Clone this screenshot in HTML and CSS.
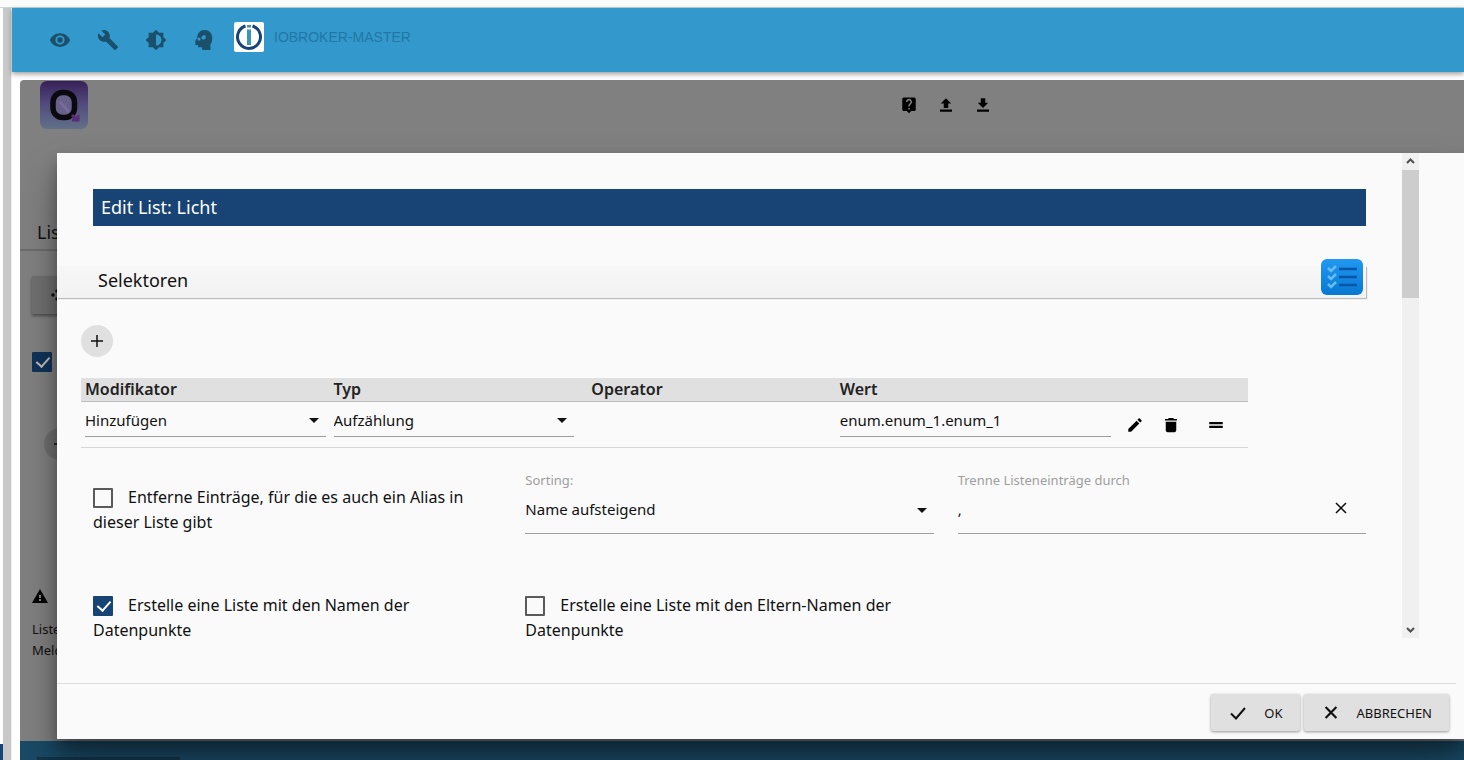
FILE: index.html
```html
<!DOCTYPE html>
<html lang="de">
<head>
<meta charset="utf-8">
<title>ioBroker – Edit List</title>
<link rel="stylesheet" href="styles.css">
</head>
<body>
<div class="top-strip"></div>
<div class="shell">
  <aside class="rail"><div class="rail-track"></div><div class="rail-mark"></div></aside>
  <div class="page">
    <header class="toolbar">
      <button class="tool" aria-label="Anzeigen"><svg viewBox="0 0 24 24"><path d="M12 9a3 3 0 0 0 0 6 3 3 0 0 0 0-6m0 8a5 5 0 1 1 0-10 5 5 0 0 1 0 10m0-12.500C7 4.500 2.700 7.600 1 12c1.700 4.400 6 7.500 11 7.500s9.300-3.100 11-7.500c-1.700-4.400-6-7.500-11-7.500z"/></svg></button>
      <button class="tool" aria-label="Einstellungen"><svg viewBox="0 0 24 24"><path d="M22.700 19l-9.100-9.100c.9-2.300.4-5-1.500-6.900-2-2-5-2.400-7.400-1.300L9 6 6 9 1.600 4.700C.4 7.100.9 10.100 2.900 12.100c1.900 1.900 4.600 2.400 6.900 1.500l9.100 9.100c.4.4 1 .4 1.400 0l2.300-2.300c.5-.4.5-1.100.1-1.400z"/></svg></button>
      <button class="tool" aria-label="Helligkeit"><svg viewBox="0 0 24 24"><path d="M20 15.300 23.300 12 20 8.700V4h-4.700L12 .7 8.700 4H4v4.700L.7 12 4 15.300V20h4.700l3.300 3.300 3.300-3.300H20v-4.700zM12 18V6a6 6 0 0 1 0 12z"/></svg></button>
      <button class="tool" aria-label="Expertenmodus"><svg viewBox="0 0 24 24"><path fill-rule="evenodd" d="M13 1C9 1 6 3 5 6.500L4.500 9.500 2.500 13v4.500h3V20H10v3h9v-6.500c1.500-1.500 2-4 2-7C21 4.500 17.500 1 13 1zM11.500 6.500a2.500 2.500 0 1 1-2.500 2.500zM5 9.500h3v3H5z"/></svg></button>
      <div class="brand">
        <svg class="brand-logo" viewBox="0 0 30 30"><rect width="30" height="30" rx="2" fill="#fff"/><path d="M11.500 4A11.500 11.500 0 1 0 18.500 4" fill="none" stroke="#174475" stroke-width="3"/><path d="M15 7.500V23" stroke="#3a94bd" stroke-width="4"/><path d="M13 3h4v2.500h-4z" fill="#3a94bd"/></svg>
        <span class="brand-name">IOBROKER-MASTER</span>
      </div>
    </header>

    <main class="panel">
      <div class="panel-top">
        <svg class="q-logo" viewBox="0 0 48 48"><defs><linearGradient id="qg" x1="0" y1="0" x2="0" y2="1"><stop offset="0" stop-color="#382057"/><stop offset=".45" stop-color="#50487c"/><stop offset="1" stop-color="#617088"/></linearGradient></defs><rect width="48" height="48" rx="7" fill="url(#qg)"/><rect x="13" y="11.500" width="21.500" height="25" rx="9.500" fill="#66608a" stroke="#0a0a0e" stroke-width="5.500"/><path d="M20 21l9 10" stroke="#7a6b9c" stroke-width="3"/><path d="M32 34l6 6m0-6v5h-6" fill="none" stroke="#5b2c78" stroke-width="3"/></svg>
        <div class="panel-actions">
          <button class="mini" aria-label="Hilfe"><svg viewBox="0 0 24 24"><path fill-rule="evenodd" d="M19 2H5a2 2 0 0 0-2 2v14c0 1.100.9 2 2 2h4l3 3 3-3h4a2 2 0 0 0 2-2V4a2 2 0 0 0-2-2zm-6 16h-2v-2h2v2zm2.100-7.700-.9.900c-.8.700-1.200 1.300-1.200 2.800h-2v-.5c0-1.100.4-2.100 1.200-2.800l1.200-1.300A2 2 0 1 0 10 8H8a4 4 0 1 1 7.100 2.300z"/></svg></button>
          <button class="mini" aria-label="Hochladen"><svg viewBox="0 0 24 24"><path d="M9 16h6v-6h4l-7-7-7 7h4v6zM4 18h16v3H4z"/></svg></button>
          <button class="mini" aria-label="Herunterladen"><svg viewBox="0 0 24 24"><path d="M15 3H9v6H5l7 7 7-7h-4V3zM4 18h16v3H4z"/></svg></button>
        </div>
      </div>
      <h2 class="bg-title">Listen</h2>
      <div class="bg-side">
        <button class="bg-button" aria-label="Listen"><svg viewBox="0 0 24 24"><circle cx="5" cy="12" r="3"/><circle cx="12" cy="5" r="3"/><circle cx="12" cy="19" r="3"/><circle cx="16" cy="12" r="3"/></svg></button>
        <input class="check bg-check" type="checkbox" checked aria-label="Aktiv">
        <button class="round bg-round" aria-label="Hinzufügen"><svg viewBox="0 0 12 12"><path d="M6 0v12M0 6h12"/></svg></button>
        <svg class="warning" viewBox="0 0 16 14"><path fill-rule="evenodd" d="M8 0l8 14H0zM7 6v3h2V6zm0 4v2h2v-2z"/></svg>
        <p class="bg-note">Liste<br>Meldung</p>
      </div>
      <footer class="panel-foot"><div class="foot-button"></div></footer>

      <section class="modal" role="dialog" aria-labelledby="dlg">
        <div class="modal-main">
          <div class="modal-body">
            <h1 class="title" id="dlg">Edit List: Licht</h1>
            <div class="section">
              <h2 class="section-name">Selektoren</h2>
              <svg class="section-icon" viewBox="0 0 42 36"><defs><linearGradient id="lg" x1="0" y1="0" x2="0" y2="1"><stop offset="0" stop-color="#2098f2"/><stop offset="1" stop-color="#0878d2"/></linearGradient></defs><rect width="42" height="36" rx="6" fill="url(#lg)"/><g fill="none" stroke-width="2.500"><path d="M7 9l3 3 5-5M7 17l3 3 5-5M7 25l3 3 5-5" stroke="#65bdf0"/><path d="M18 10h18M18 18h18M18 26h18" stroke="#0b55a8"/></g></svg>
            </div>
            <button class="round" aria-label="Selektor hinzufügen"><svg viewBox="0 0 12 12"><path d="M6 0v12M0 6h12"/></svg></button>
            <table class="selectors">
              <colgroup><col class="c-mod"><col class="c-typ"><col class="c-op"><col class="c-val"><col></colgroup>
              <thead><tr><th>Modifikator</th><th>Typ</th><th>Operator</th><th>Wert</th><th></th></tr></thead>
              <tbody><tr>
                <td><div class="pick"><select class="field" aria-label="Modifikator"><option>Hinzufügen</option></select></div></td>
                <td class="typ"><div class="pick"><select class="field" aria-label="Typ"><option>Aufzählung</option></select></div></td>
                <td></td>
                <td><input class="field" type="text" aria-label="Wert" value="enum.enum_1.enum_1"></td>
                <td><div class="row-tools">
                  <button class="mini" aria-label="Bearbeiten"><svg viewBox="0 0 24 24"><path d="M3 17.200V21h3.800L17.800 9.900l-3.700-3.700L3 17.200zM20.700 7c.4-.4.4-1 0-1.400l-2.300-2.300c-.4-.4-1-.4-1.400 0l-1.800 1.800 3.700 3.700L20.700 7z"/></svg></button>
                  <button class="mini" aria-label="Löschen"><svg viewBox="0 0 24 24"><path d="M5 19c0 1.500 1 2.500 2.500 2.500h9c1.500 0 2.500-1 2.500-2.500V7.500H5V19zM20 4h-4l-1-1.500H9L8 4H4v2h16V4z"/></svg></button>
                  <button class="mini drag" aria-label="Verschieben"><svg viewBox="0 0 24 24"><path d="M3 8h18v3H3zM3 13h18v3H3z"/></svg></button>
                </div></td>
              </tr></tbody>
            </table>
            <div class="options">
              <label class="option"><input class="check" type="checkbox"><span>Entferne Einträge, für die es auch ein Alias in dieser Liste gibt</span></label>
              <div class="entry">
                <label for="sort">Sorting:</label>
                <div class="pick"><select class="field" id="sort"><option>Name aufsteigend</option></select></div>
              </div>
              <div class="entry">
                <label for="sep">Trenne Listeneinträge durch</label>
                <div class="clearable"><input class="field" id="sep" type="text" value=","><button class="clear" aria-label="Leeren"><svg viewBox="0 0 12 12"><path d="M1 1l10 10M11 1L1 11"/></svg></button></div>
              </div>
              <label class="option"><input class="check" type="checkbox" checked><span>Erstelle eine Liste mit den Namen der Datenpunkte</span></label>
              <label class="option"><input class="check" type="checkbox"><span>Erstelle eine Liste mit den Eltern-Namen der Datenpunkte</span></label>
            </div>
          </div>
          <div class="scroll">
            <svg viewBox="0 0 17 17"><path d="M5 10l3.500-3.500L12 10"/></svg>
            <div class="thumb"></div>
            <svg class="scroll-down" viewBox="0 0 17 17"><path d="M5 7l3.500 3.500L12 7"/></svg>
          </div>
        </div>
        <div class="modal-foot">
          <button class="btn"><svg viewBox="0 0 16 14"><path d="M1 7.500l5 5L15 2"/></svg>OK</button>
          <button class="btn"><svg class="cross" viewBox="0 0 12 12"><path d="M1 1l10 10M11 1L1 11"/></svg>ABBRECHEN</button>
        </div>
      </section>
    </main>
  </div>
</div>
</body>
</html>
```
FILE: styles.css
```css
* { box-sizing: border-box; }
body {
  margin: 0;
  height: 100vh;
  display: flex;
  flex-direction: column;
  overflow: hidden;
  background: #fff;
  color: #111;
  font: 16px/24px "Noto Sans", sans-serif;
}
h1, h2, p { margin: 0; font-weight: 400; }
button { font: inherit; color: inherit; border: 0; padding: 0; background: none; display: grid; place-items: center; cursor: pointer; }

.top-strip { height: 8px; flex: none; background: #fafcfa; border-bottom: 1px solid #c8d4da; }
.shell { flex: 1; display: flex; min-height: 0; }
.rail { width: 12px; display: flex; flex-direction: column; }
.rail-track { flex: 1; border-left: 3px solid #fff; border-right: 1px solid #eee; background: #c9c9c9; }
.rail-mark { height: 16px; border-left: 3px solid #174475; border-right: 1px solid #eee; background: #c9c9c9; }
.page { flex: 1; min-width: 0; display: flex; flex-direction: column; }

.toolbar {
  height: 64px;
  flex: none;
  display: flex;
  align-items: center;
  gap: 24px;
  padding-left: 36px;
  background: #3399cc;
  box-shadow: 0 2px 5px rgba(0, 0, 0, .4);
}
.tool { width: 24px; height: 24px; color: #1b506b; }
.tool svg { width: 22px; height: 22px; fill: currentColor; }
.brand { display: flex; align-items: center; gap: 10px; margin: 0 0 6px -6px; }
.brand-logo { width: 30px; height: 30px; }
.brand-name { font: 14px/20px "Liberation Sans", Arial, sans-serif; color: #2277a4; }

.panel {
  flex: 1;
  position: relative;
  display: flex;
  flex-direction: column;
  margin: 8px 0 0 8px;
  overflow: hidden;
  border-radius: 4px 0 0 0;
  background: #808080;
}
.panel-top { display: flex; padding: 1px 0 0 20px; height: 138px; }
.q-logo { width: 48px; height: 48px; }
.panel-actions { display: flex; gap: 19px; margin: 15px 0 0 57%; height: 18px; }
.mini { width: 18px; height: 18px; color: #000; }
.mini svg { width: 18px; height: 18px; fill: currentColor; }
.bg-title { padding: 0 17px; height: 33px; font-size: 18px; line-height: 28px; border-bottom: 2px solid #6c6c6c; }
.bg-side { flex: 1; display: flex; flex-direction: column; align-items: flex-start; padding: 25px 12px 0; }
.bg-button { width: 90px; height: 38px; padding-left: 18px; justify-items: start; background: #707070; box-shadow: 0 2px 3px rgba(0, 0, 0, .4); }
.bg-button svg { width: 14px; height: 14px; fill: #111; }
.check.bg-check { margin-top: 38px; filter: brightness(.75); }
.bg-round.round { margin: 56px 0 0 12px; background: #707070; }
.warning { width: 16px; height: 14px; margin-top: 129px; }
.bg-note { margin-top: 16px; font-size: 13px; line-height: 21px; }
.panel-foot { height: 19px; padding: 16px 17px 0; background: #1a4a66; }
.foot-button { width: 143px; height: 3px; background: #123548; }

.modal {
  position: absolute;
  inset: 73px 0 21px 37px;
  display: flex;
  flex-direction: column;
  background: #fafafa;
  box-shadow: 0 24px 38px rgba(0, 0, 0, .3), 0 11px 15px rgba(0, 0, 0, .3);
}
.modal-main { flex: 1; display: flex; padding: 0 45px 37px 0; min-height: 0; }
.modal-body { flex: 1; min-width: 0; overflow: hidden; padding: 36px 36px 0; }
.title { padding: 0 8px; font-size: 18px; line-height: 37px; background: #174475; color: #fff; }
.section {
  position: relative;
  margin: 40px 0 27px -36px;
  padding-left: 41px;
  background: linear-gradient(#f7f7f7, #f2f2f2);
  box-shadow: 1px 1px 1px #bbb;
}
.section-name { padding-bottom: 4px; font-size: 18px; line-height: 28px; }
.section-icon { position: absolute; right: 3px; bottom: 3px; width: 42px; height: 36px; }
.round { width: 32px; height: 32px; margin-left: -12px; border-radius: 50%; background: #e0e0e0; }
.round svg { width: 12px; height: 12px; stroke: #111; stroke-width: 1.500; }

.selectors { width: calc(90% + 21px); margin: 21px 0 0 -12px; border-collapse: collapse; table-layout: fixed; }
.c-mod { width: 21.300%; }
.c-typ { width: 22.100%; }
.c-op { width: 21.300%; }
.c-val { width: 23.900%; }
.selectors th { padding: 0 4px; text-align: left; font-weight: 600; line-height: 23px; background: #e0e0e0; border-bottom: 1px solid #bdbdbd; color: #222; }
.selectors td { height: 46px; padding: 4px; vertical-align: top; border-bottom: 1px solid #d6d6d6; }
.selectors .typ { padding-right: 13px; }
.field {
  display: block;
  width: 100%;
  height: 31px;
  padding: 0 0 2px;
  border: 0;
  border-bottom: 1px solid #9e9e9e;
  border-radius: 0;
  outline: 0;
  appearance: none;
  background: transparent;
  color: #111;
  font: 15px/24px "Noto Sans", sans-serif;
}
.pick { position: relative; }
.pick::after { content: ""; position: absolute; right: 7px; top: 12px; border: 5px solid transparent; border-top-color: #111; border-bottom: 0; }
.row-tools { display: flex; gap: 18px; padding: 10px 0 0 7px; }
.drag { margin-left: 9px; }

.options { display: grid; grid-template-columns: repeat(3, 1fr); column-gap: 24px; row-gap: 58px; margin-top: 23px; }
.option { line-height: 25px; padding-top: 14px; }
.option:nth-child(n+4) { padding-top: 0; }
.check {
  appearance: none;
  width: 20px;
  height: 20px;
  margin: 0 15px 0 0;
  vertical-align: -5px;
  border: 2px solid #5a5a5a;
  border-radius: 1px;
}
.check:checked { border-color: #174475; background: #174475; }
.check:checked::after { content: ""; display: block; width: 6px; height: 11px; margin: 0 0 0 5px; border: solid #fff; border-width: 0 2px 2px 0; transform: rotate(42deg); }
.entry label { display: block; font-size: 13px; line-height: 18px; color: #9e9e9e; }
.entry .field { height: 45px; padding-bottom: 5px; }
.entry .pick::after { top: 19px; }
.clearable { position: relative; }
.clear { position: absolute; right: 18px; top: 12px; width: 14px; height: 14px; }
.clear svg { width: 12px; height: 12px; stroke: #111; stroke-width: 1.500; }

.scroll { width: 17px; margin-bottom: 8px; display: flex; flex-direction: column; background: #f0f0f0; }
.scroll svg { width: 17px; height: 17px; fill: none; stroke: #505050; stroke-width: 2; }
.thumb { height: 128px; background: #cdcdcd; }
.scroll-down { margin-top: auto; }

.modal-foot { display: flex; justify-content: flex-end; gap: 4px; margin-right: 8px; padding: 10px 7px 8px 0; border-top: 1px solid #ddd; }
.btn { display: flex; align-items: center; height: 37px; gap: 18px; padding: 0 17px 0 19px; border-radius: 2px; background: #e0e0e0; font-size: 13px; box-shadow: 0 1px 3px rgba(0, 0, 0, .4); }
.btn svg { width: 16px; height: 14px; fill: none; stroke: #111; stroke-width: 2; }
.btn .cross { height: 13px; }
```
